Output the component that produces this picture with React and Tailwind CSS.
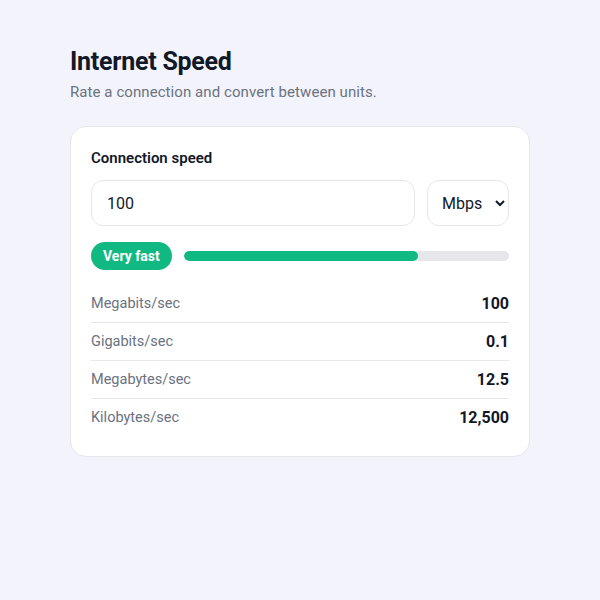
import React, { useState } from 'react'

const rows = [
  { label: 'Megabits/sec', value: '100' },
  { label: 'Gigabits/sec', value: '0.1' },
  { label: 'Megabytes/sec', value: '12.5' },
  { label: 'Kilobytes/sec', value: '12,500' },
]

export default function App() {
  const [speed, setSpeed] = useState('100')
  const [unit, setUnit] = useState('Mbps')

  return (
    <div className="min-h-screen bg-[#f3f4fb] font-['Roboto',sans-serif] text-gray-900">
      <div className="w-[460px] mx-auto pt-[46px]">
        <h1 className="text-[25px] leading-8 font-bold tracking-[-0.01em] text-[#111827]">Internet Speed</h1>
        <p className="mt-[3px] text-[15px] tracking-[0.005em] text-[#6b7280]">Rate a connection and convert between units.</p>

        <div className="mt-[22px] bg-white border border-[#e5e7eb] rounded-2xl px-5 pt-[20px] pb-[19px]">
          <label className="block text-[15px] font-semibold text-[#111827]">Connection speed</label>

          <div className="mt-[11px] flex gap-3">
            <input
              value={speed}
              onChange={e => setSpeed(e.target.value)}
              className="flex-1 min-w-0 h-[46px] rounded-xl border border-[#e5e7eb] px-[15px] text-[16px] text-[#111827] outline-none"
            />
            <select
              value={unit}
              onChange={e => setUnit(e.target.value)}
              className="w-[82px] h-[46px] rounded-xl border border-[#e5e7eb] bg-white pl-[10px] pr-1 text-[16px] text-[#111827] outline-none"
            >
              <option>Kbps</option>
              <option>Mbps</option>
              <option>Gbps</option>
            </select>
          </div>

          <div className="mt-4 flex items-center gap-3">
            <span className="h-[28px] px-3 inline-flex items-center rounded-full bg-[#10b981] text-white text-[14px] font-bold">Very fast</span>
            <div className="flex-1 h-[10px] rounded-full bg-[#e5e7eb] overflow-hidden">
              <div className="h-full rounded-full bg-[#10b981]" style={{ width: '72%' }} />
            </div>
          </div>

          <div className="mt-[15px]">
            {rows.map((r, i) => (
              <div
                key={r.label}
                className={'flex items-center justify-between h-[38px] ' + (i < rows.length - 1 ? 'border-b border-[#e5e7eb]' : '')}
              >
                <span className="text-[14.5px] text-[#6b7280]">{r.label}</span>
                <span className="text-[16px] font-bold text-[#111827]">{r.value}</span>
              </div>
            ))}
          </div>
        </div>
      </div>
    </div>
  )
}
